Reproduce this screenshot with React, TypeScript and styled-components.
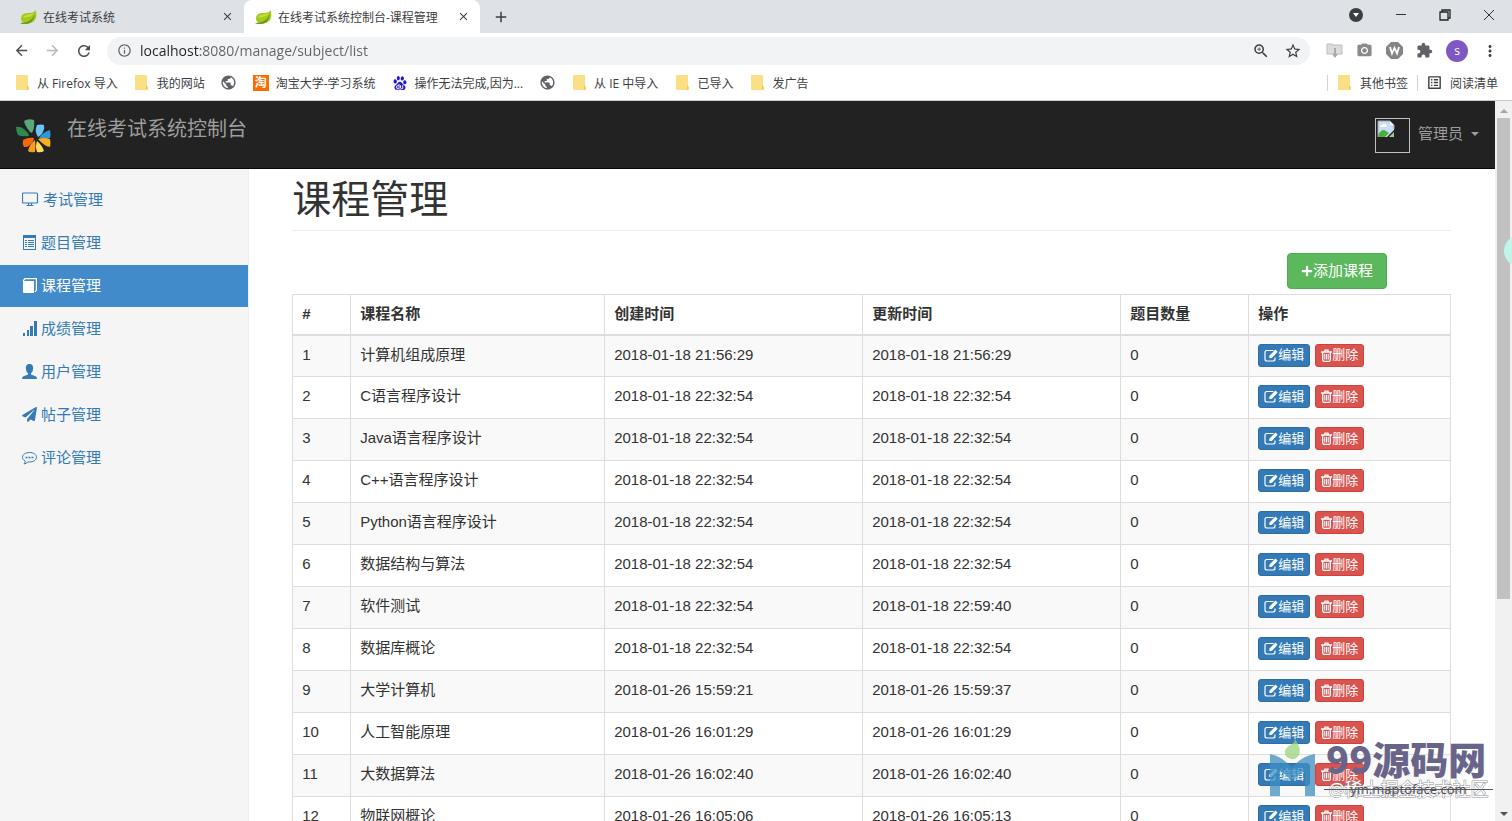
import React from "react";
import styled, { createGlobalStyle } from "styled-components";
import {
  MdAdd,
  MdArrowBack,
  MdArrowForward,
  MdClose,
  MdExtension,
  MdInfoOutline,
  MdMoreVert,
  MdOutlineListAlt,
  MdPhotoCamera,
  MdPublic,
  MdRefresh,
  MdStarBorder,
  MdZoomIn,
} from "react-icons/md";
import { SiBaidu } from "react-icons/si";
import { FaPaperPlane, FaPlus } from "react-icons/fa";

const GlobalStyle = createGlobalStyle`
  *, *::before, *::after { box-sizing: border-box; }
  body { margin: 0; overflow: hidden; background: #fff; }
  button, input { font: inherit; margin: 0; padding: 0; border: 0; background: none; }
  a { text-decoration: none; color: inherit; }
  svg { display: block; flex: none; }
`;

const Window = styled.div`
  position: relative;
  display: flex;
  flex-direction: column;
  height: 100vh;
  overflow: hidden;
  font-family: "Open Sans", "Noto Sans CJK SC", sans-serif;
  font-size: 12px;
  color: #3c4043;
`;

/* ---------- browser chrome ---------- */

const TabStrip = styled.div`
  display: flex;
  flex: none;
  height: 33px;
  background: #dee1e6;
`;

const Tab = styled.div<{ $active?: boolean }>`
  display: flex;
  align-items: center;
  gap: 6px;
  width: ${(p) => (p.$active ? 236 : 244)}px;
  padding: 0 10px 0 ${(p) => (p.$active ? 11 : 20)}px;
  border-radius: 8px 8px 0 0;
  background: ${(p) => (p.$active ? "#fff" : "transparent")};
`;

const TabTitle = styled.span`
  flex: 1;
  white-space: nowrap;
`;

const IconButton = styled.button<{ $color?: string }>`
  display: flex;
  align-items: center;
  justify-content: center;
  color: ${(p) => p.$color ?? "#3c4043"};
`;

const NewTab = styled(IconButton)`
  width: 42px;
`;

const WindowControls = styled.div`
  display: flex;
  align-items: center;
  gap: 32px;
  margin-left: auto;
  padding: 0 17px 3px 0;
`;

const Toolbar = styled.div`
  display: flex;
  align-items: center;
  flex: none;
  height: 35px;
  padding: 0 13px;
`;

const NavButtons = styled.div`
  display: flex;
  gap: 14px;
  margin-right: 14px;
`;

const AddressBar = styled.label`
  display: flex;
  flex: 1;
  align-items: center;
  gap: 8px;
  height: 28px;
  padding: 0 8px 0 10px;
  border-radius: 14px;
  background: #f1f3f4;
  color: #5f6368;
`;

const Address = styled.input`
  flex: 1;
  min-width: 0;
  height: 24px;
  font-size: 14px;
  color: #5f6368;
  outline: none;
  background: linear-gradient(90deg, #202124 60px, #5f6368 60px);
  -webkit-background-clip: text;
  background-clip: text;
  -webkit-text-fill-color: transparent;
`;

const AddressActions = styled.span`
  display: flex;
  gap: 14px;
`;

const Extensions = styled.div`
  display: flex;
  align-items: center;
  gap: 13px;
  margin-left: 16px;
`;

const Avatar = styled.button`
  width: 22px;
  height: 22px;
  border-radius: 50%;
  background: #7e57c2;
  color: #fff;
  font-size: 12px;
  line-height: 20px;
`;

const BookmarkBar = styled.nav`
  display: flex;
  align-items: center;
  flex: none;
  gap: 16px;
  height: 33px;
  padding: 0 14px 3px;
  border-bottom: 1px solid #c8cbcd;
`;

const Bookmark = styled.a`
  display: flex;
  align-items: center;
  gap: 7px;
  color: #3c4043;
  white-space: nowrap;
`;

const BookmarkIcon = styled.span`
  display: flex;
  justify-content: center;
  width: 16px;
`;

const OtherBookmarks = styled.div`
  display: flex;
  align-items: center;
  gap: 9px;
  margin-left: auto;
`;

const Divider = styled.span`
  width: 1px;
  height: 16px;
  background: #d0d2d5;
`;

const TaoBadge = styled.span`
  width: 16px;
  height: 16px;
  background: #ff6a00;
  color: #fff;
  font-weight: 700;
  font-size: 12px;
  line-height: 15px;
  text-align: center;
`;

/* ---------- page ---------- */

const Viewport = styled.div`
  position: relative;
  display: flex;
  flex: 1;
  min-height: 0;
`;

const Page = styled.div`
  display: flex;
  flex: 1;
  flex-direction: column;
  min-width: 0;
  overflow: hidden;
  font-family: "Liberation Sans", "Noto Sans CJK SC", sans-serif;
  font-size: 15px;
  line-height: 22px;
  color: #333;
`;

const Header = styled.header`
  display: flex;
  flex: none;
  align-items: flex-start;
  gap: 16px;
  height: 68px;
  padding: 17px 16px;
  background: #222;
  border-bottom: 1px solid #080808;
  color: #9d9d9d;
`;

const Brand = styled.a`
  font-size: 20px;
`;

const UserMenu = styled.button`
  display: flex;
  align-items: flex-start;
  gap: 8px;
  margin-left: auto;
  color: #9d9d9d;
`;

const UserName = styled.span`
  display: flex;
  align-items: center;
  gap: 8px;
  height: 32px;
`;

const MissingPhoto = styled.span`
  width: 35px;
  height: 35px;
  padding: 1px;
  border: 1px solid #c0c0c0;
`;

const Caret = styled.span`
  border: 4px solid transparent;
  border-top-color: currentColor;
  border-bottom: 0;
`;

const Body = styled.div`
  display: flex;
  flex: 1;
  min-height: 0;
`;

const Sidebar = styled.nav`
  flex: none;
  display: flex;
  flex-direction: column;
  gap: 1px;
  width: calc(100% / 6);
  padding-top: 10px;
  background: #f5f5f5;
  border-right: 1px solid #eee;
`;

const SideLink = styled.a<{ $active?: boolean }>`
  display: flex;
  align-items: center;
  gap: 4px;
  height: 42px;
  padding: 0 22px 1px;
  background: ${(p) => (p.$active ? "#428bca" : "transparent")};
  color: ${(p) => (p.$active ? "#fff" : "#337ab7")};
`;

const Main = styled.main`
  flex: 1;
  min-width: 0;
  padding: 9px 44px 0 43px;
`;

const Title = styled.h1`
  margin: 0 0 22px;
  padding-bottom: 8px;
  border-bottom: 1px solid #eee;
  font-size: 39px;
  line-height: 44px;
  font-weight: 400;
`;

const Actions = styled.div`
  display: flex;
  justify-content: flex-end;
  padding: 0 64px 5px 0;
`;

const AddButton = styled.button`
  display: flex;
  align-items: center;
  height: 36px;
  padding: 0 13px 1px;
  border: 1px solid #4cae4c;
  border-radius: 4px;
  background: #5cb85c;
  color: #fff;
`;

const Table = styled.table`
  width: 100%;
  table-layout: fixed;
  border-collapse: collapse;
  th, td {
    border: 1px solid #ddd;
    padding: 8px 9px;
    text-align: left;
    vertical-align: top;
  }
  th { height: 40px; border-bottom-width: 2px; }
  td { height: 42px; }
  tbody tr:nth-child(odd) { background: #f9f9f9; }
`;

const RowActions = styled.div`
  display: flex;
  gap: 5px;
`;

const RowButton = styled.button<{ $danger?: boolean }>`
  display: flex;
  align-items: center;
  height: 23px;
  padding: 0 5px;
  border: 1px solid ${(p) => (p.$danger ? "#d43f3a" : "#2e6da4")};
  border-radius: 3px;
  background: ${(p) => (p.$danger ? "#d9534f" : "#337ab7")};
  color: #fff;
  font-size: 13px;
`;

const ScrollTrack = styled.div`
  display: flex;
  flex: none;
  flex-direction: column;
  align-items: center;
  justify-content: space-between;
  width: 17px;
  padding: 8px 0 5px;
  background: #f1f1f1;
`;

const ScrollThumb = styled.div`
  flex: 0 1 68%;
  width: 13px;
  margin: 5px 0 auto;
  background: #c1c1c1;
`;

const ScrollArrow = styled.span<{ $up?: boolean }>`
  border: 4px solid transparent;
  ${(p) => (p.$up ? "border-bottom-color: #a3a3a3; border-top: 0;" : "border-top-color: #505050; border-bottom: 0;")}
`;

const FloatingDot = styled.button`
  position: absolute;
  top: 134px;
  right: -24px;
  width: 32px;
  height: 32px;
  border-radius: 50%;
  background: #bff5ea;
`;

const Watermark = styled.div`
  position: absolute;
  right: 19px;
  bottom: 21px;
  display: flex;
  gap: 7px;
  pointer-events: none;
`;

const WatermarkText = styled.div`
  display: flex;
  flex-direction: column;
  width: 169px;
`;

const WatermarkName = styled.span`
  padding-left: 2px;
  font-family: "Noto Sans CJK SC", sans-serif;
  font-size: 38px;
  font-weight: 900;
  line-height: 40px;
  color: #69658a;
  white-space: nowrap;
`;

const WatermarkLines = styled.div`
  display: grid;
  align-items: center;
  justify-items: center;
  line-height: 22px;
  white-space: nowrap;
  > * { grid-area: 1 / 1; }
`;

const Community = styled.span`
  font-size: 18px;
  color: #fff;
  -webkit-text-stroke: 1px #8f8f8f;
  paint-order: stroke;
`;

const Site = styled.span`
  font-size: 13px;
  color: #4c4c58;
`;

const Rule = styled.span`
  width: 100%;
  height: 1px;
  background: #55555f;
`;

/* ---------- drawings ---------- */

const Leaf = () => (
  <svg width="17" height="16" viewBox="0 0 17 16">
    <path d="M1 10C1 5 4 4 9 4c4 0 6-2 7-3 1 7 0 12-6 13-4 1-8 1-9-4z" fill="#a5c91f" />
    <path d="M0 14c8 0 12-3 15-9-1 6-4 10-9 10-3 0-5 0-6-1z" fill="#6b9a16" />
    <path d="M3 9c2-4 6-3 11-5-2 4-7 4-11 5z" fill="#c6dd3b" />
  </svg>
);

const Folder = () => (
  <svg width="13" height="15" viewBox="0 0 13 15">
    <path d="M1 0h10q1 0 1 1v9l1 3q0 2-2 2H1q-1 0-1-1V1q0-1 1-1z" fill="#fbdf84" />
    <path d="M11 10l2 3q0 2-2 2z" fill="#efc858" />
  </svg>
);

const Pinwheel = () => (
  <svg width="35" height="36" viewBox="0 0 35 36">
    <path d="M8 3Q12 0 18 2q1 8-2 13l-2-1Q9 8 8 3z" fill="#5aa877" />
    <path d="M0 9q5-1 9 3 3 2 4 6-7 1-11-1Q0 13 0 9z" fill="#2f8a50" />
    <path d="M21 7q4-1 7 0 1 5-3 10l-3 2q-4-6-1-12z" fill="#6cc4f2" />
    <path d="M34 12q1 5 0 8-5 1-11 0 4-6 11-8z" fill="#2f97da" />
    <path d="M7 22q5-3 11-2 0 5-7 9H8q-2-3-1-7z" fill="#ef6a10" />
    <path d="M19 22q1 6 0 12-5 1-7-1 1-6 7-11z" fill="#f99b1b" />
    <path d="M21 23q5 4 7 10-3 2-7 1-2-5 0-11z" fill="#fbd95a" />
    <path d="M22 21q6-2 12 0 1 4 0 8-6-1-12-8z" fill="#f5b01f" />
  </svg>
);

const BrokenImage = () => (
  <svg width="18" height="18" viewBox="0 0 18 18">
    <path d="M1 1h12l4 4v5l-7 7H1z" fill="#c9dcf8" />
    <path d="M3 7q0-2 2-2 1-2 3-1 2 0 2 2 0 1-1 1z" fill="#fff" />
    <path d="M1 15q4-7 8-4l3 2-4 4H1z" fill="#4caf38" />
    <path d="M17 12v5h-5z" fill="#9ccf88" />
    <path d="M13 1v4h4z" fill="#fff" />
    <path d="M1 17V1h12l4 4v4" fill="none" stroke="#a8acb4" />
  </svg>
);

const Desktop = () => (
  <svg width="17" height="15" viewBox="0 0 17 15" fill="none" stroke="currentColor">
    <rect x="0.500" y="1" width="15" height="10" rx="1" strokeWidth="1.2" />
    <path d="M6.500 11v2M9.500 11v2M4.500 13.5h7" strokeWidth="1.2" />
  </svg>
);

const ListAlt = () => (
  <svg width="15" height="15" viewBox="0 0 15 15">
    <path fillRule="evenodd" fill="currentColor" d="M1 0h13v15H1zM2 3v11h11V3z" />
    <path d="M3 5.5h2M3 7.5h2M3 9.5h2M3 11.5h2M6 5.5h6M6 7.5h6M6 9.5h6M6 11.5h6" stroke="currentColor" />
  </svg>
);

const Book = () => (
  <svg width="15" height="15" viewBox="0 0 15 15">
    <path d="M1 3h11v12H2q-1 0-1-1z" fill="currentColor" />
    <path d="M1 3l2-2.400h11.400v11.400l-1.400 2" fill="none" stroke="currentColor" strokeWidth="1.2" />
  </svg>
);

const Signal = () => (
  <svg width="15" height="15" viewBox="0 0 15 15" fill="currentColor">
    <path d="M1 12h2v3H1zM5 9h2v6H5zM8 5h3v10H8zM12 0h3v15h-3z" />
  </svg>
);

const User = () => (
  <svg width="15" height="15" viewBox="0 0 15 15" fill="currentColor">
    <path d="M7.500 0C10 0 11.500 1.500 11 5q0 3-2 4v1.500l5 2q1 .5 1 2.500H0q0-2 1-2.500l5-2V9Q4 8 4 5C3.500 1.500 5 0 7.500 0z" />
  </svg>
);

const Comment = () => (
  <svg width="15" height="14" viewBox="0 0 15 14" fill="none" stroke="currentColor">
    <path d="M7.500 1.500c4 0 7 2 7 4.700s-3 4.800-7 4.800l-1.500-.1C5 12 3.500 12.700 2 13c.8-.8 1.200-1.700 1.200-2.800C1.500 9.300.5 7.800.5 6.200c0-2.700 3-4.700 7-4.700z" />
    <path d="M3.500 6.500h2M6.500 6.500h2M9.500 6.500h2" strokeWidth="1.600" />
  </svg>
);

const Edit = () => (
  <svg width="14" height="13" viewBox="0 0 14 13" fill="none" stroke="currentColor">
    <path d="M9.500 1.500H3q-2 0-2 2V10q0 2 2 2h6q2 0 2-2V8.500" strokeWidth="1.200" />
    <path d="M11.500 0.500l2.200 2.200-6 6.300H5.300V6.700z" fill="currentColor" stroke="none" />
  </svg>
);

const Trash = () => (
  <svg width="11" height="13" viewBox="0 0 11 13" fill="none" stroke="currentColor">
    <path d="M0 3h11M3.500 3l.5-1.800h3L7.500 3" strokeWidth="1.300" />
    <path d="M1.700 3v7.800q0 1.500 1 1.500h5.600q1 0 1-1.500V3" strokeWidth="1.300" />
    <path d="M3.800 5v5.500M5.500 5v5.500M7.200 5v5.500" strokeWidth="1" />
  </svg>
);

const MapLogo = () => (
  <svg width="49" height="59" viewBox="0 0 49 59" opacity=".75">
    <path d="M2 16q12 2 22 14 9-12 23-14v42H37V33q-8 4-13 11-5-7-12-11v25H2z" fill="#3f8fc2" />
    <path d="M27 1q7 10 4 16-3 5-8 4-7-2-6-8 1-4 7-7 3-2 3-5z" fill="#9bd47d" />
  </svg>
);

const Minimize = () => (
  <svg width="12" height="12" viewBox="0 0 12 12" stroke="#333"><path d="M1 5.500h10" /></svg>
);

const Restore = () => (
  <svg width="12" height="12" viewBox="0 0 12 12" fill="none" stroke="#222">
    <path d="M1 3h8v8H1zM3 3V1h8v8H9" strokeWidth="1.300" />
  </svg>
);

const CloseWindow = () => (
  <svg width="12" height="12" viewBox="0 0 12 12" stroke="#333"><path d="M1 1l10 10M11 1L1 11" /></svg>
);

const TabSearch = () => (
  <svg width="14" height="14" viewBox="0 0 14 14">
    <circle cx="7" cy="7" r="7" fill="#3c4043" />
    <path d="M4 5h6l-3 4z" fill="#fff" />
  </svg>
);

const FolderDownload = () => (
  <svg width="17" height="15" viewBox="0 0 17 15">
    <path d="M1 1h5l1 1h9v9H1z" fill="#dcdcdc" stroke="#bdbdbd" />
    <path d="M8 5h2v6h2l-3 4-3-4h2z" fill="#aaa" />
  </svg>
);

const Octagon = () => (
  <svg width="17" height="17" viewBox="0 0 17 17">
    <path d="M5 0h7l5 5v7l-5 5H5l-5-5V5z" fill="#858585" />
    <path d="M4 5l2 6.500L8.500 6 11 11.500 13 5" fill="none" stroke="#fff" strokeWidth="1.800" />
  </svg>
);

/* ---------- data ---------- */

type BookmarkItem = { icon: React.ReactNode; text?: string; label?: string };

const bookmarks: BookmarkItem[] = [
  { icon: <Folder />, text: "从 Firefox 导入" },
  { icon: <Folder />, text: "我的网站" },
  { icon: <MdPublic size={17} color="#5f6368" />, label: "网站" },
  { icon: <TaoBadge>淘</TaoBadge>, text: "淘宝大学-学习系统" },
  { icon: <SiBaidu size={14} color="#2319dc" />, text: "操作无法完成,因为..." },
  { icon: <MdPublic size={17} color="#5f6368" />, label: "网站" },
  { icon: <Folder />, text: "从 IE 中导入" },
  { icon: <Folder />, text: "已导入" },
  { icon: <Folder />, text: "发广告" },
];

const menu = [
  { icon: <Desktop />, text: "考试管理" },
  { icon: <ListAlt />, text: "题目管理" },
  { icon: <Book />, text: "课程管理", active: true },
  { icon: <Signal />, text: "成绩管理" },
  { icon: <User />, text: "用户管理" },
  { icon: <FaPaperPlane size={15} />, text: "帖子管理" },
  { icon: <Comment />, text: "评论管理" },
];

const columns = [
  { title: "#", width: 58 },
  { title: "课程名称", width: 254 },
  { title: "创建时间", width: 258 },
  { title: "更新时间", width: 258 },
  { title: "题目数量", width: 128 },
  { title: "操作", width: 202 },
];

const Col = styled.col<{ $width: number }>`
  width: ${(p) => p.$width}px;
`;

const subjects = [
  ["计算机组成原理", "2018-01-18 21:56:29", "2018-01-18 21:56:29"],
  ["C语言程序设计", "2018-01-18 22:32:54", "2018-01-18 22:32:54"],
  ["Java语言程序设计", "2018-01-18 22:32:54", "2018-01-18 22:32:54"],
  ["C++语言程序设计", "2018-01-18 22:32:54", "2018-01-18 22:32:54"],
  ["Python语言程序设计", "2018-01-18 22:32:54", "2018-01-18 22:32:54"],
  ["数据结构与算法", "2018-01-18 22:32:54", "2018-01-18 22:32:54"],
  ["软件测试", "2018-01-18 22:32:54", "2018-01-18 22:59:40"],
  ["数据库概论", "2018-01-18 22:32:54", "2018-01-18 22:32:54"],
  ["大学计算机", "2018-01-26 15:59:21", "2018-01-26 15:59:37"],
  ["人工智能原理", "2018-01-26 16:01:29", "2018-01-26 16:01:29"],
  ["大数据算法", "2018-01-26 16:02:40", "2018-01-26 16:02:40"],
  ["物联网概论", "2018-01-26 16:05:06", "2018-01-26 16:05:13"],
];

export default function App() {
  return (
    <Window>
      <GlobalStyle />
      <TabStrip>
        <Tab>
          <Leaf />
          <TabTitle>在线考试系统</TabTitle>
          <IconButton aria-label="关闭标签页"><MdClose size={13} /></IconButton>
        </Tab>
        <Tab $active>
          <Leaf />
          <TabTitle>在线考试系统控制台-课程管理</TabTitle>
          <IconButton aria-label="关闭标签页"><MdClose size={13} /></IconButton>
        </Tab>
        <NewTab aria-label="新标签页"><MdAdd size={18} /></NewTab>
        <WindowControls>
          <IconButton aria-label="搜索标签页"><TabSearch /></IconButton>
          <IconButton aria-label="最小化"><Minimize /></IconButton>
          <IconButton aria-label="还原"><Restore /></IconButton>
          <IconButton aria-label="关闭"><CloseWindow /></IconButton>
        </WindowControls>
      </TabStrip>

      <Toolbar>
        <NavButtons>
          <IconButton aria-label="后退" $color="#4a4d51"><MdArrowBack size={17} /></IconButton>
          <IconButton aria-label="前进" $color="#b5b7ba"><MdArrowForward size={17} /></IconButton>
          <IconButton aria-label="刷新" $color="#4a4d51"><MdRefresh size={18} /></IconButton>
        </NavButtons>
        <AddressBar>
          <MdInfoOutline size={15} />
          <Address aria-label="地址" defaultValue="localhost:8080/manage/subject/list" />
          <AddressActions>
            <IconButton aria-label="缩放"><MdZoomIn size={18} /></IconButton>
            <IconButton aria-label="收藏"><MdStarBorder size={18} /></IconButton>
          </AddressActions>
        </AddressBar>
        <Extensions>
          <IconButton aria-label="下载"><FolderDownload /></IconButton>
          <IconButton aria-label="截图" $color="#8a8a8a"><MdPhotoCamera size={17} /></IconButton>
          <IconButton aria-label="W"><Octagon /></IconButton>
          <IconButton aria-label="扩展程序" $color="#5f6368"><MdExtension size={17} /></IconButton>
          <Avatar>s</Avatar>
          <IconButton aria-label="菜单"><MdMoreVert size={18} /></IconButton>
        </Extensions>
      </Toolbar>

      <BookmarkBar>
        {bookmarks.map((b, i) => (
          <Bookmark key={i} href="#" aria-label={b.label}>
            <BookmarkIcon>{b.icon}</BookmarkIcon>
            {b.text}
          </Bookmark>
        ))}
        <OtherBookmarks>
          <Divider />
          <Bookmark href="#"><BookmarkIcon><Folder /></BookmarkIcon>其他书签</Bookmark>
          <Divider />
          <Bookmark href="#"><BookmarkIcon><MdOutlineListAlt size={17} /></BookmarkIcon>阅读清单</Bookmark>
        </OtherBookmarks>
      </BookmarkBar>

      <Viewport>
        <Page>
          <Header>
            <Pinwheel />
            <Brand href="#">在线考试系统控制台</Brand>
            <UserMenu>
              <MissingPhoto><BrokenImage /></MissingPhoto>
              <UserName>管理员<Caret /></UserName>
            </UserMenu>
          </Header>
          <Body>
            <Sidebar>
              {menu.map((m) => (
                <SideLink key={m.text} href="#" $active={m.active}>
                  {m.icon}
                  {m.text}
                </SideLink>
              ))}
            </Sidebar>
            <Main>
              <Title>课程管理</Title>
              <Actions>
                <AddButton><FaPlus size={12} />添加课程</AddButton>
              </Actions>
              <Table>
                <colgroup>
                  {columns.map((c) => <Col key={c.title} $width={c.width} />)}
                </colgroup>
                <thead>
                  <tr>{columns.map((c) => <th key={c.title}>{c.title}</th>)}</tr>
                </thead>
                <tbody>
                  {subjects.map(([name, created, updated], i) => (
                    <tr key={name}>
                      <td>{i + 1}</td>
                      <td>{name}</td>
                      <td>{created}</td>
                      <td>{updated}</td>
                      <td>0</td>
                      <td>
                        <RowActions>
                          <RowButton><Edit />编辑</RowButton>
                          <RowButton $danger><Trash />删除</RowButton>
                        </RowActions>
                      </td>
                    </tr>
                  ))}
                </tbody>
              </Table>
            </Main>
          </Body>
        </Page>
        <ScrollTrack>
          <ScrollArrow $up />
          <ScrollThumb />
          <ScrollArrow />
        </ScrollTrack>
        <FloatingDot aria-label="助手" />
      </Viewport>

      <Watermark>
        <MapLogo />
        <WatermarkText>
          <WatermarkName>99源码网</WatermarkName>
          <WatermarkLines>
            <Community>@稀土掘金技术社区</Community>
            <Site>ym.maptoface.com</Site>
            <Rule />
          </WatermarkLines>
        </WatermarkText>
      </Watermark>
    </Window>
  );
}
